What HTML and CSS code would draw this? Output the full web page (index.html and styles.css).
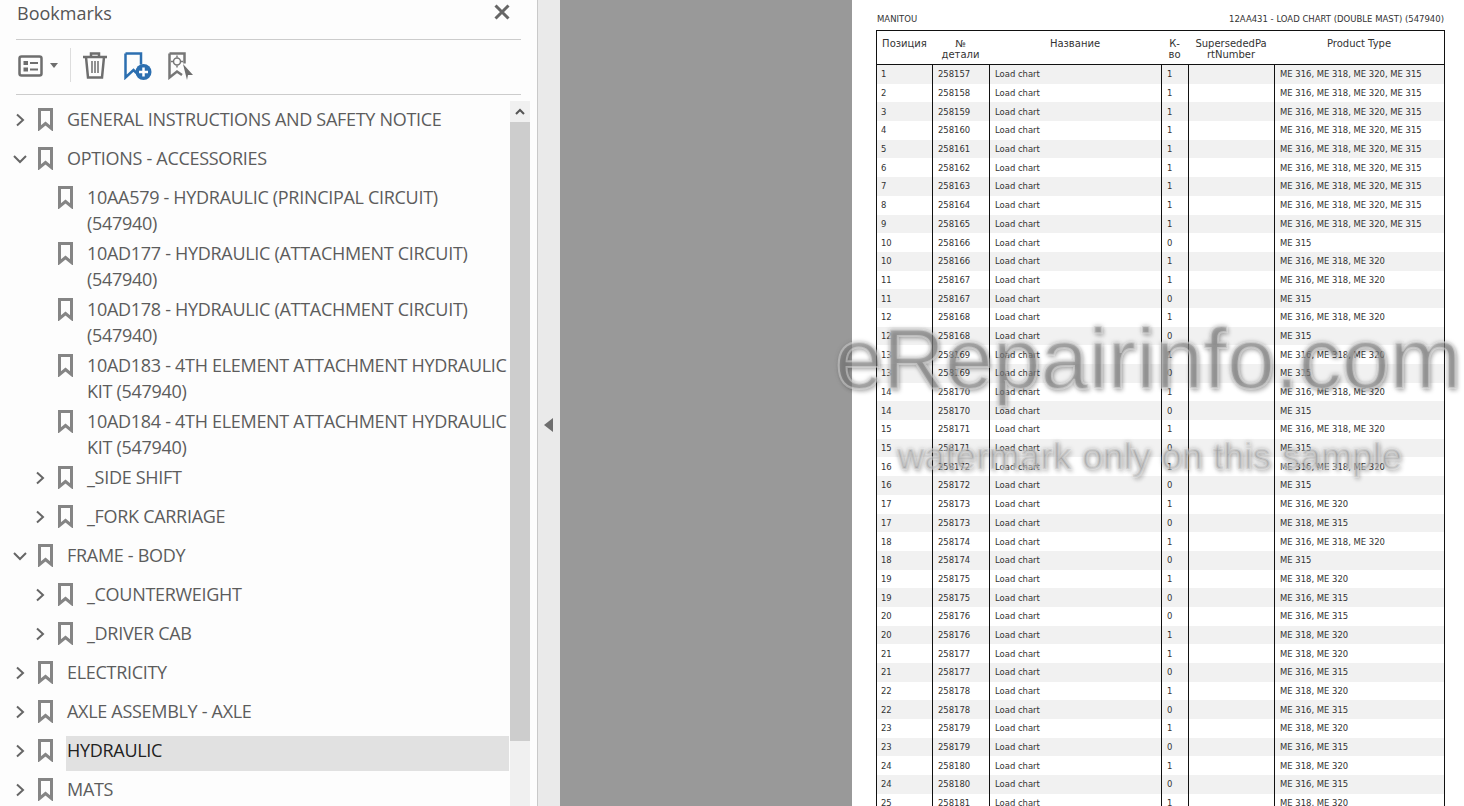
FILE: index.html
```html
<!DOCTYPE html>
<html>
<head>
  <meta charset="UTF-8">
  <title>Bookmarks</title>
  <link rel="stylesheet" href="styles.css">
</head>
<body>
<svg class="defs" width="0" height="0">
  <symbol id="bm" viewBox="0 0 15 23"><path d="M1.500 1.500h12v19l-6-5-6 5z" fill="none" stroke="#858585" stroke-width="3"/></symbol>
  <symbol id="closed" viewBox="0 0 14 16"><path d="M4 2.500l6 5.500-6 5.500" fill="none" stroke="#666" stroke-width="2"/></symbol>
  <symbol id="open" viewBox="0 0 14 16"><path d="M1 5l6 6 6-6" fill="none" stroke="#666" stroke-width="2"/></symbol>
</svg>
<div class="app">
  <div class="panel">
    <div class="panel-head">
      <span class="panel-title">Bookmarks</span>
      <svg class="close" width="16" height="16" viewBox="0 0 16 16"><path d="M1.500 1.500l13 13M14.500 1.500l-13 13" stroke="#666" stroke-width="3"/></svg>
    </div>
    <div class="toolbar">
      <svg class="tool-list" width="25" height="22" viewBox="0 0 25 22"><rect x="1.500" y="1.500" width="22" height="19" rx="2" fill="none" stroke="#6e6e6e" stroke-width="2.500"/><rect x="5.500" y="6" width="4.500" height="4" fill="#6e6e6e"/><rect x="5.500" y="12.500" width="4.500" height="4" fill="#6e6e6e"/><path d="M12 8h8M12 14.500h8" stroke="#6e6e6e" stroke-width="2"/></svg>
      <svg class="tool-caret" width="8" height="5" viewBox="0 0 8 5"><path d="M0 0h8l-4 5z" fill="#6e6e6e"/></svg>
      <span class="tool-sep"></span>
      <svg class="tool-trash" width="26" height="29" viewBox="0 0 26 29"><path d="M1 6h24M9 5V2.500h8V5" fill="none" stroke="#6e6e6e" stroke-width="2.500"/><path d="M4 6l2 20.500h14L22 6" fill="none" stroke="#6e6e6e" stroke-width="2.500"/><path d="M10 10v12M13 10v12M16 10v12" stroke="#6e6e6e" stroke-width="1.500"/></svg>
      <svg class="tool-add" width="28" height="28" viewBox="0 0 28 28"><path d="M1.500 1.500h15.500v11M1.500 1.500v24l8-7.500 3 3" fill="none" stroke="#2c6fb0" stroke-width="2.500"/><circle cx="19.500" cy="20" r="8" fill="#2c6fb0"/><path d="M15 20h9M19.500 15.500v9" stroke="#fff" stroke-width="2.500"/></svg>
      <svg class="tool-find" width="26" height="28" viewBox="0 0 26 28"><path d="M1.500 1.500h15v10M1.500 1.500v24l7.500-6 5 3.500" fill="none" stroke="#777" stroke-width="2.500"/><circle cx="9" cy="9.500" r="3.500" fill="none" stroke="#777" stroke-width="1.500"/><path d="M9 3.500v2M9 13.500v2M3 9.500h2M13 9.500h2" stroke="#777" stroke-width="1.500"/><path d="M15 12l10 11h-5l-1 5z" fill="#6e6e6e"/></svg>
    </div>
    <div class="panel-body">
      <div class="tree">
        <div class="row"><svg class="chev"><use href="#closed"/></svg><svg class="bm"><use href="#bm"/></svg><span class="label">GENERAL INSTRUCTIONS AND SAFETY NOTICE</span></div>
        <div class="row"><svg class="chev"><use href="#open"/></svg><svg class="bm"><use href="#bm"/></svg><span class="label">OPTIONS - ACCESSORIES</span></div>
        <div class="row sub two"><span class="chev"></span><svg class="bm"><use href="#bm"/></svg><span class="label">10AA579 - HYDRAULIC (PRINCIPAL CIRCUIT)<br>(547940)</span></div>
        <div class="row sub two"><span class="chev"></span><svg class="bm"><use href="#bm"/></svg><span class="label">10AD177 - HYDRAULIC (ATTACHMENT CIRCUIT)<br>(547940)</span></div>
        <div class="row sub two"><span class="chev"></span><svg class="bm"><use href="#bm"/></svg><span class="label">10AD178 - HYDRAULIC (ATTACHMENT CIRCUIT)<br>(547940)</span></div>
        <div class="row sub two"><span class="chev"></span><svg class="bm"><use href="#bm"/></svg><span class="label">10AD183 - 4TH ELEMENT ATTACHMENT HYDRAULIC<br>KIT (547940)</span></div>
        <div class="row sub two"><span class="chev"></span><svg class="bm"><use href="#bm"/></svg><span class="label">10AD184 - 4TH ELEMENT ATTACHMENT HYDRAULIC<br>KIT (547940)</span></div>
        <div class="row sub"><svg class="chev"><use href="#closed"/></svg><svg class="bm"><use href="#bm"/></svg><span class="label">_SIDE SHIFT</span></div>
        <div class="row sub"><svg class="chev"><use href="#closed"/></svg><svg class="bm"><use href="#bm"/></svg><span class="label">_FORK CARRIAGE</span></div>
        <div class="row"><svg class="chev"><use href="#open"/></svg><svg class="bm"><use href="#bm"/></svg><span class="label">FRAME - BODY</span></div>
        <div class="row sub"><svg class="chev"><use href="#closed"/></svg><svg class="bm"><use href="#bm"/></svg><span class="label">_COUNTERWEIGHT</span></div>
        <div class="row sub"><svg class="chev"><use href="#closed"/></svg><svg class="bm"><use href="#bm"/></svg><span class="label">_DRIVER CAB</span></div>
        <div class="row"><svg class="chev"><use href="#closed"/></svg><svg class="bm"><use href="#bm"/></svg><span class="label">ELECTRICITY</span></div>
        <div class="row"><svg class="chev"><use href="#closed"/></svg><svg class="bm"><use href="#bm"/></svg><span class="label">AXLE ASSEMBLY - AXLE</span></div>
        <div class="row selected"><svg class="chev"><use href="#closed"/></svg><svg class="bm"><use href="#bm"/></svg><span class="label">HYDRAULIC</span></div>
        <div class="row"><svg class="chev"><use href="#closed"/></svg><svg class="bm"><use href="#bm"/></svg><span class="label">MATS</span></div>
      </div>
      <div class="scrollbar">
        <div class="scroll-up"><svg width="10" height="7" viewBox="0 0 10 7"><path d="M1 6l4-4 4 4" fill="none" stroke="#555" stroke-width="2"/></svg></div>
        <div class="scroll-thumb"></div>
      </div>
    </div>
  </div>
  <div class="splitter"><svg width="9" height="14" viewBox="0 0 9 14"><path d="M9 0v14L0 7z" fill="#6e6e6e"/></svg></div>
  <div class="gutter"></div>
  <div class="page">
    <div class="page-head"><span>MANITOU</span><span>12AA431 - LOAD CHART (DOUBLE MAST) (547940)</span></div>
    <table class="parts">
      <colgroup><col class="c1"><col class="c2"><col class="c3"><col class="c4"><col class="c5"><col class="c6"></colgroup>
      <thead>
        <tr><th>Позиция</th><th>№<br>детали</th><th>Название</th><th>К-<br>во</th><th>SupersededPa<br>rtNumber</th><th>Product Type</th></tr>
      </thead>
      <tbody>
        <tr><td>1</td><td>258157</td><td>Load chart</td><td>1</td><td></td><td>ME 316, ME 318, ME 320, ME 315</td></tr>
        <tr><td>2</td><td>258158</td><td>Load chart</td><td>1</td><td></td><td>ME 316, ME 318, ME 320, ME 315</td></tr>
        <tr><td>3</td><td>258159</td><td>Load chart</td><td>1</td><td></td><td>ME 316, ME 318, ME 320, ME 315</td></tr>
        <tr><td>4</td><td>258160</td><td>Load chart</td><td>1</td><td></td><td>ME 316, ME 318, ME 320, ME 315</td></tr>
        <tr><td>5</td><td>258161</td><td>Load chart</td><td>1</td><td></td><td>ME 316, ME 318, ME 320, ME 315</td></tr>
        <tr><td>6</td><td>258162</td><td>Load chart</td><td>1</td><td></td><td>ME 316, ME 318, ME 320, ME 315</td></tr>
        <tr><td>7</td><td>258163</td><td>Load chart</td><td>1</td><td></td><td>ME 316, ME 318, ME 320, ME 315</td></tr>
        <tr><td>8</td><td>258164</td><td>Load chart</td><td>1</td><td></td><td>ME 316, ME 318, ME 320, ME 315</td></tr>
        <tr><td>9</td><td>258165</td><td>Load chart</td><td>1</td><td></td><td>ME 316, ME 318, ME 320, ME 315</td></tr>
        <tr><td>10</td><td>258166</td><td>Load chart</td><td>0</td><td></td><td>ME 315</td></tr>
        <tr><td>10</td><td>258166</td><td>Load chart</td><td>1</td><td></td><td>ME 316, ME 318, ME 320</td></tr>
        <tr><td>11</td><td>258167</td><td>Load chart</td><td>1</td><td></td><td>ME 316, ME 318, ME 320</td></tr>
        <tr><td>11</td><td>258167</td><td>Load chart</td><td>0</td><td></td><td>ME 315</td></tr>
        <tr><td>12</td><td>258168</td><td>Load chart</td><td>1</td><td></td><td>ME 316, ME 318, ME 320</td></tr>
        <tr><td>12</td><td>258168</td><td>Load chart</td><td>0</td><td></td><td>ME 315</td></tr>
        <tr><td>13</td><td>258169</td><td>Load chart</td><td>1</td><td></td><td>ME 316, ME 318, ME 320</td></tr>
        <tr><td>13</td><td>258169</td><td>Load chart</td><td>0</td><td></td><td>ME 315</td></tr>
        <tr><td>14</td><td>258170</td><td>Load chart</td><td>1</td><td></td><td>ME 316, ME 318, ME 320</td></tr>
        <tr><td>14</td><td>258170</td><td>Load chart</td><td>0</td><td></td><td>ME 315</td></tr>
        <tr><td>15</td><td>258171</td><td>Load chart</td><td>1</td><td></td><td>ME 316, ME 318, ME 320</td></tr>
        <tr><td>15</td><td>258171</td><td>Load chart</td><td>0</td><td></td><td>ME 315</td></tr>
        <tr><td>16</td><td>258172</td><td>Load chart</td><td>1</td><td></td><td>ME 316, ME 318, ME 320</td></tr>
        <tr><td>16</td><td>258172</td><td>Load chart</td><td>0</td><td></td><td>ME 315</td></tr>
        <tr><td>17</td><td>258173</td><td>Load chart</td><td>1</td><td></td><td>ME 316, ME 320</td></tr>
        <tr><td>17</td><td>258173</td><td>Load chart</td><td>0</td><td></td><td>ME 318, ME 315</td></tr>
        <tr><td>18</td><td>258174</td><td>Load chart</td><td>1</td><td></td><td>ME 316, ME 318, ME 320</td></tr>
        <tr><td>18</td><td>258174</td><td>Load chart</td><td>0</td><td></td><td>ME 315</td></tr>
        <tr><td>19</td><td>258175</td><td>Load chart</td><td>1</td><td></td><td>ME 318, ME 320</td></tr>
        <tr><td>19</td><td>258175</td><td>Load chart</td><td>0</td><td></td><td>ME 316, ME 315</td></tr>
        <tr><td>20</td><td>258176</td><td>Load chart</td><td>0</td><td></td><td>ME 316, ME 315</td></tr>
        <tr><td>20</td><td>258176</td><td>Load chart</td><td>1</td><td></td><td>ME 318, ME 320</td></tr>
        <tr><td>21</td><td>258177</td><td>Load chart</td><td>1</td><td></td><td>ME 318, ME 320</td></tr>
        <tr><td>21</td><td>258177</td><td>Load chart</td><td>0</td><td></td><td>ME 316, ME 315</td></tr>
        <tr><td>22</td><td>258178</td><td>Load chart</td><td>1</td><td></td><td>ME 318, ME 320</td></tr>
        <tr><td>22</td><td>258178</td><td>Load chart</td><td>0</td><td></td><td>ME 316, ME 315</td></tr>
        <tr><td>23</td><td>258179</td><td>Load chart</td><td>1</td><td></td><td>ME 318, ME 320</td></tr>
        <tr><td>23</td><td>258179</td><td>Load chart</td><td>0</td><td></td><td>ME 316, ME 315</td></tr>
        <tr><td>24</td><td>258180</td><td>Load chart</td><td>1</td><td></td><td>ME 318, ME 320</td></tr>
        <tr><td>24</td><td>258180</td><td>Load chart</td><td>0</td><td></td><td>ME 316, ME 315</td></tr>
        <tr><td>25</td><td>258181</td><td>Load chart</td><td>1</td><td></td><td>ME 318, ME 320</td></tr>
      </tbody>
    </table>
  </div>
</div>
<div class="wm wm-big">eRepairinfo.com</div>
<div class="wm wm-small">watermark only on this sample</div>
</body>
</html>
```

FILE: styles.css
```css
html, body {
  margin: 0;
  height: 100%;
  overflow: hidden;
  background: #fff;
}

.defs {
  position: absolute;
}

.app {
  display: flex;
  height: 806px;
  font-family: "Open Sans", "Noto Sans", sans-serif;
}

/* left bookmarks panel */
.panel {
  width: 537px;
  flex: none;
  background: #fdfdfd;
  border-right: 1px solid #c9c9c9;
  display: flex;
  flex-direction: column;
  overflow: hidden;
}

.panel-head {
  height: 39px;
  margin: 0 16px;
  padding: 0 11px 0 1px;
  border-bottom: 1px solid #ccc;
  display: flex;
  justify-content: space-between;
  align-items: flex-start;
}

.panel-title {
  font-size: 18px;
  line-height: 26px;
  color: #555;
}

.close {
  margin-top: 4px;
}

.toolbar {
  height: 50px;
  padding-bottom: 4px;
  margin: 0 16px;
  border-bottom: 1px solid #ccc;
  display: flex;
  align-items: center;
}

.tool-list { margin-left: 2px; margin-top: 1px; }
.tool-caret { margin-left: 7px; margin-top: 1px; }
.tool-sep { width: 1px; height: 34px; margin-left: 12px; background: #ddd; }
.tool-trash { margin-left: 11px; }
.tool-add { margin-left: 16px; margin-top: 1px; }
.tool-find { margin-left: 16px; margin-top: 1px; }

.panel-body {
  flex: 1;
  display: flex;
  min-height: 0;
}

.tree {
  width: 510px;
  padding-top: 5px;
  flex: none;
}

.row {
  display: flex;
  align-items: flex-start;
  padding-left: 13px;
}

.row.sub {
  padding-left: 33px;
}

.chev {
  width: 14px;
  height: 16px;
  margin-top: 12px;
  flex: none;
}

.bm {
  width: 15px;
  height: 23px;
  margin: 8px 14px 0 11px;
  flex: none;
}

.label {
  flex: 1;
  padding: 6px 0 7px;
  font-size: 18px;
  line-height: 26px;
  letter-spacing: -0.3px;
  white-space: nowrap;
  color: #5c5c5c;
}

.two .label {
  padding-bottom: 0;
  margin-bottom: -2px;
}

.selected .label {
  margin: 5px 1px -1px -1px;
  padding: 1px 0 8px 1px;
  background: #e1e1e1;
  color: #222;
}

.scrollbar {
  width: 20px;
  margin-top: 6px;
  background: #f0f0f0;
  flex: none;
}

.scroll-up {
  height: 21px;
  display: flex;
  align-items: center;
  justify-content: center;
}

.scroll-thumb {
  height: 619px;
  background: #cdcdcd;
}

/* strip between panel and document */
.splitter {
  width: 22px;
  flex: none;
  background: #eaeaea;
  display: flex;
  align-items: center;
  justify-content: center;
}

.splitter svg {
  margin-top: 44px;
  margin-right: 1px;
}

.gutter {
  width: 292px;
  flex: none;
  background: #999;
}

/* document page */
.page {
  flex: 1;
  background: #fff;
  padding: 14px 20px 0 24px;
  font-family: "DejaVu Sans", Verdana, sans-serif;
  font-size: 8.450px;
  color: #333;
  overflow: hidden;
}

.page-head {
  display: flex;
  justify-content: space-between;
  height: 16px;
  line-height: 11px;
  padding: 0 0 0 1px;
  font-size: 8.500px;
}

.parts {
  width: 569px;
  table-layout: fixed;
  border-collapse: separate;
  border-spacing: 0;
  border: 1px solid #111;
}

.c1 { width: 55px; }
.c2 { width: 57px; }
.c3 { width: 172px; }
.c4 { width: 27px; }
.c5 { width: 86px; }
.c6 { width: 170px; }

.parts th {
  height: 34px;
  padding: 7px 0 0;
  font-size: 10px;
  font-weight: normal;
  line-height: 11px;
  text-align: center;
  vertical-align: top;
  box-sizing: border-box;
  border-bottom: 1px solid #111;
  white-space: nowrap;
}

.parts td {
  height: 18.700px;
  padding: 1px 0 0 5px;
  line-height: 11px;
  border-left: 1px solid #111;
  box-sizing: border-box;
  white-space: nowrap;
}

.parts td:first-child {
  border-left: none;
  padding-left: 4px;
}

.parts tbody tr:nth-child(odd) {
  background: #f1f1f1;
}

/* watermark laid over the page */
.wm {
  position: absolute;
  font-family: "Liberation Sans", Arial, sans-serif;
  white-space: nowrap;
  color: rgba(150, 150, 150, 0.4);
  -webkit-text-stroke: 2px rgba(240, 240, 240, 0.4);
  text-shadow: 0 0 4px rgba(90, 90, 90, 0.55), 2px 3px 4px rgba(0, 0, 0, 0.22);
}

.wm-big {
  left: 835px;
  top: 308px;
  font-size: 86px;
  line-height: 100px;
}

.wm-small {
  left: 897px;
  top: 434px;
  font-size: 37.400px;
  line-height: 44px;
}
```
